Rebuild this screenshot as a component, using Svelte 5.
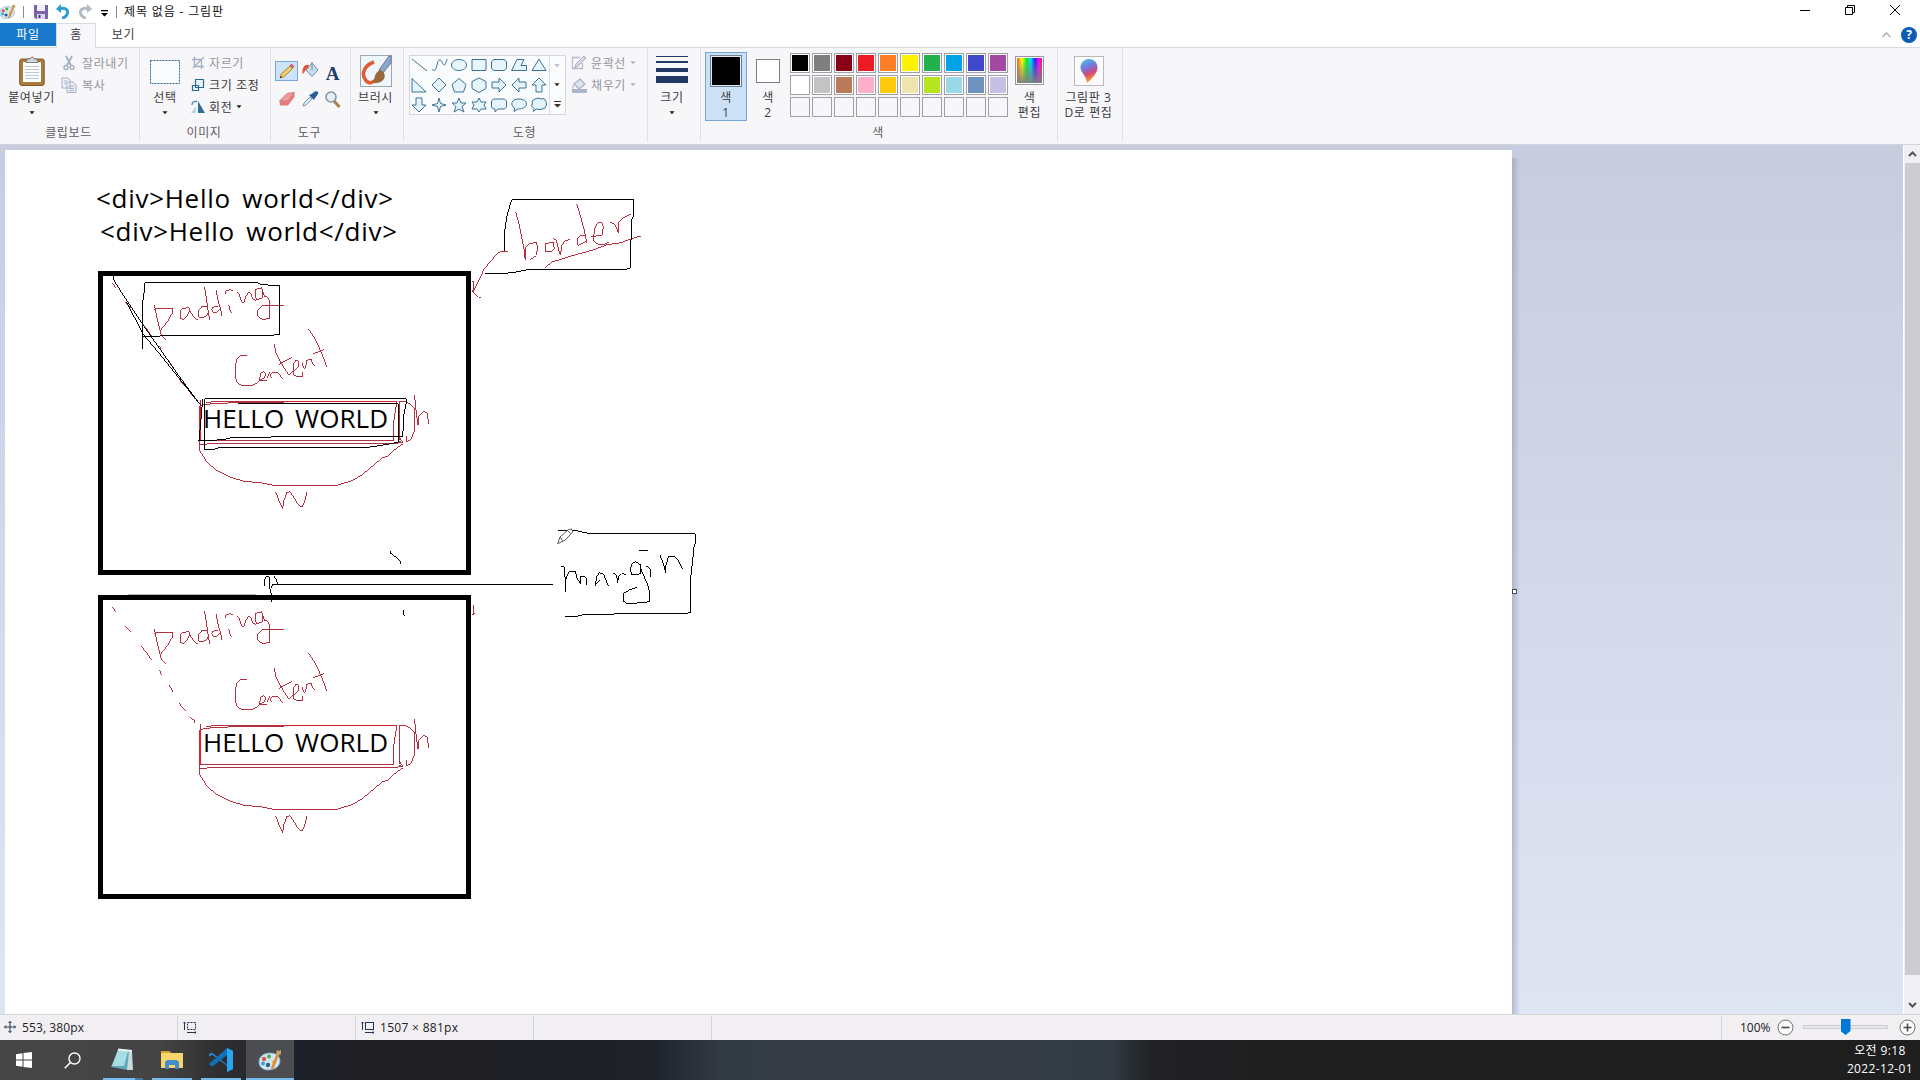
<script>
  const palette = [
    '#000000', '#7f7f7f', '#880015', '#ed1c24', '#ff7f27', '#fff200', '#22b14c', '#00a2e8', '#3f48cc', '#a349a4',
    '#ffffff', '#c3c3c3', '#b97a57', '#ffaec9', '#ffc90e', '#efe4b0', '#b5e61d', '#99d9ea', '#7092be', '#c8bfe7',
    null, null, null, null, null, null, null, null, null, null
  ];

  // Outlines of the shape gallery, each in a 20 x 20 cell
  const shapes = [
    'M3 4L18 16',
    'M3 14C5 17 7 15 8 10S11 3 13 7S16 12 18 4',
    'M10 4.500C14.500 4.500 17.500 7 17.500 10S14.500 15.500 10 15.500S2.500 13 2.500 10S5.500 4.500 10 4.500Z',
    'M3 4.500H17V15.500H3Z',
    'M5 4.500H15L17.500 6.500V13.500L15 15.500H5L2.500 13.500V6.500Z',
    'M8 4.500H15L12 10.500H17.500V15.500H2.500Z',
    'M10 4L17 15.500H3Z',
    'M3 3.500L17 17H3Z',
    'M10 3L17 10L10 17L3 10Z',
    'M10 3.500L17 9.500L14.500 17H5.500L3 9.500Z',
    'M10 3L17 6.500V13.500L10 17.500L3 13.500V6.500Z',
    'M3 7H10V3L17 10L10 17V13H3Z',
    'M17 7H10V3L3 10L10 17V13H17Z',
    'M7 17V10H3L10 3L17 10H13V17Z',
    'M7 4V11H3L10 18L17 11H13V4Z',
    'M10 4L11.500 9.500L17 11L11.500 12.500L10 18L8.500 12.500L3 11L8.500 9.500Z',
    'M10 4L12 9H17L13 12.500L15 18L10 15L5 18L7 12.500L3 9H8Z',
    'M10 4L12 8H17L15 11L17 15H12L10 18L8 15H3L5 11L3 8H8Z',
    'M4.500 5H15.500L17.500 7V13L15.500 15H9L6 18V15H4.500L2.500 13V7Z',
    'M10 5C14.500 5 17.500 7 17.500 10S14 15 9 15L5 17.500L5.500 14C1 11 2 5 10 5Z',
    'M6 5L9 4L12 5L15 4.500L17 7.500L17.500 11L15.500 14.500L11 15.500L7 15L4.500 17.500L5 14.500L2.500 12L3.500 9L3 7Z'
  ];

  // Freehand strokes that appear in both boxes
  const redStrokes = [
    'M97 80L107 95M135 138L152 155M183 198L200 217L214 240M238 270L244 284M267 315L279 335M297 369L315 391M330 412L343 420L344 428',
    'M222 145L226 165L235 205L243 235L257 251M222 158L262 155L278 157L276 170L262 195L240 222',
    'M302 187L300 165L304 158L325 152M325 152L330 165L340 180L350 191L354 189M302 187L310 188L322 175L330 160',
    'M373 93L378 125L384 165L388 190M384 150L365 150L356 160L356 181L362 185L378 178L386 165',
    'M407 100L413 130L420 155L425 178M413 150L398 152L394 158L397 168L410 167L417 158',
    'M445 145L449 160L454 170M435 112L437 104L446 100L459 101',
    'M472 107L478 117L484 137L491 137L497 120L504 107L512 112L517 128L527 132',
    'M527 98L545 94L546 125L528 130L526 115L527 98M546 100L552 120L562 122L568 135V187L545 188L533 180V160L545 148L570 146H612',
    'M500 298L480 298L470 307L466 325V365L472 380L485 387H515L530 380L540 368',
    'M540 352L550 345L556 350L553 362L540 373H559M540 352L538 372',
    'M560 365L568 348L573 365M573 350L590 347L597 352L606 367',
    'M583 262L585 285L600 315L615 340L626 355L640 343M597 323L615 313L636 302',
    'M640 345L655 330L656 315L648 311L640 320V355L650 361L668 360V347',
    'M665 320L672 338L676 330L680 312L692 307L697 320L704 330',
    'M684 217L700 240L715 270L730 305L740 332M697 292L730 280',
    'M362 430L360 460V553H941V490L945 465L950 437',
    'M378 437L470 434H950M362 447L380 443L470 438H612',
    'M357 450V566L385 562H940L968 557M958 437V550',
    'M955 434L972 434L990 442L1002 455V525L992 548L980 556L978 540',
    'M955 553L968 560L960 545',
    'M357 560V582L370 600L380 618L410 642L450 662L490 674L550 680L582 687H768L790 680L815 673L845 655L885 622L905 605L925 598L945 578L968 562',
    'M586 706L597 735L607 757L610 735L620 707L630 706L645 730L655 746L665 751L673 735L680 708',
    'M1003 417L1007 460L1013 506L1016 480L1030 463L1040 470L1046 502',
    'M1180 75V105M1174 105L1185 98'
  ];
</script>

{#snippet caret(dim = false)}
  <svg class="caret" class:dim viewBox="0 0 7 4"><path d="M.5 0h6L3.500 3.500z" /></svg>
{/snippet}

{#snippet redSketch()}
  {#each redStrokes as d}<path {d} />{/each}
  <path class="bold" d="M612 435H950M360 450V553" />
{/snippet}

{#snippet paintIcon()}
  <svg class="palette-icon" viewBox="0 0 24 24">
    <path d="M12 5C5 5 1 9 1 14c0 5 4 8 9 8 7 0 12-4 12-9 0-5-4-8-10-8z" fill="#cfe6f3" stroke="#7fb0cc" stroke-width=".8" />
    <circle cx="6" cy="11" r="2.200" fill="#e2574b" /><circle cx="11" cy="8.500" r="2" fill="#58a94f" />
    <circle cx="5" cy="15.500" r="2" fill="#4a9ad6" /><circle cx="16" cy="14" r="2" fill="#f0b53d" />
    <circle cx="10" cy="17" r="2.200" fill="#2c5f8a" />
    <path d="M20 6L14 21" stroke="#e08a33" stroke-width="2.600" />
    <path d="M18 6l1-4 2 1 2-1v4l-3 2z" fill="#caa06a" />
  </svg>
{/snippet}

<div class="window">
  <header class="titlebar">
    <div class="quick">
      <span class="app-icon">{@render paintIcon()}</span>
      <i class="bar"></i>
      <svg class="save" width="14" height="14" viewBox="0 0 14 14"><path d="M0 0h14v14H2L0 12z" fill="#7b62a8" /><path d="M3 0h8v6H3z" fill="#eef0fa" /><path d="M3 9h8v5H3z" fill="#d8d8e8" /><path d="M4.500 10h2v3h-2z" fill="#4b3b75" /></svg>
      <svg class="undo" width="14" height="15" viewBox="0 0 14 15"><path d="M3 5C8 3 12 5 11.500 9C11 12 8 14 6 14" fill="none" stroke="#2c9bd8" stroke-width="3" /><path d="M0 5L5 0V9z" fill="#2c9bd8" /></svg>
      <svg class="redo" width="14" height="15" viewBox="0 0 14 15"><path d="M11 5C6 3 2 5 2.500 9C3 12 6 14 8 14" fill="none" stroke="#b4bac4" stroke-width="3" /><path d="M14 5L9 0V9z" fill="#b4bac4" /></svg>
      <svg class="more" width="7" height="7" viewBox="0 0 7 7"><path d="M0 0h7v1.200H0zM0 3h7L3.500 6.500z" /></svg>
      <i class="bar second"></i>
      <span class="title">제목 없음 - 그림판</span>
    </div>
    <div class="controls">
      <svg width="12" height="12" viewBox="0 0 12 12"><path d="M1 6.500h10" /></svg>
      <svg width="12" height="12" viewBox="0 0 12 12"><path d="M1.500 3.500h7v7h-7zM3.500 3V1.500h7v7H9" /></svg>
      <svg width="12" height="12" viewBox="0 0 12 12"><path d="M1 1l10 10M11 1L1 11" /></svg>
    </div>
  </header>

  <nav class="tabs">
    <span class="tab file">파일</span>
    <span class="tab home">홈</span>
    <span class="tab view">보기</span>
    <div class="help">
      <svg width="9" height="6" viewBox="0 0 9 6"><path d="M.5 5L4.500 1L8.500 5" fill="none" stroke="#a9adb3" stroke-width="1.400" /></svg>
      <b>?</b>
    </div>
  </nav>

  <section class="ribbon">
    <div class="group clipboard">
      <div class="body">
        <div class="big paste">
          <svg width="26" height="30" viewBox="0 0 26 30"><rect x=".7" y="3" width="24.500" height="26.500" rx="2" fill="#a87c3e" stroke="#7f5b2b" /><path d="M4 6h18v20H4z" fill="#fdfdfd" /><path d="M6 10.500h14M6 13.500h14M6 16.500h14M6 19.500h14M6 22.500h14" stroke="#b8c4d8" /><path d="M7 6.500L8 3h3l1.500-2h1.500L15.500 3H18l1 3.500z" fill="#d5d7db" stroke="#666" stroke-width=".8" /></svg>
          <span>붙여넣기</span>{@render caret()}
        </div>
        <div class="rows">
          <div class="row dim"><svg width="16" height="16" viewBox="0 0 16 16"><path d="M5 1l5 9.500M11 1L6 10.500" stroke="#a5b0c6" stroke-width="1.800" /><circle cx="5" cy="12.500" r="2" fill="none" stroke="#a5b0c6" stroke-width="1.400" /><circle cx="11" cy="12.500" r="2" fill="none" stroke="#a5b0c6" stroke-width="1.400" /></svg>잘라내기</div>
          <div class="row dim"><svg width="16" height="16" viewBox="0 0 16 16"><path d="M1 1h6l2 2v8H1zM6 5h6l3 3v7.500H6z" fill="#eef1f7" stroke="#a5b0c6" /><path d="M3 4h3M3 6.500h2M8 9h5M8 11.500h5M8 13.500h5" stroke="#a5b0c6" /></svg>복사</div>
        </div>
      </div>
      <div class="name">클립보드</div>
    </div>

    <div class="group image">
      <div class="body">
        <div class="big select">
          <svg width="32" height="30" viewBox="0 0 32 30"><rect x="1.500" y="4.500" width="29" height="23" fill="#fbfcfe" stroke="#2f6296" stroke-dasharray="2 1" /></svg>
          <span>선택</span>{@render caret()}
        </div>
        <div class="rows">
          <div class="row dim"><svg width="14" height="14" viewBox="0 0 14 14"><path d="M3.500 1v9.500H13M1 3.500h9.500V13M2 12L13 1" fill="none" stroke="#a5b0c6" stroke-width="1.300" /></svg>자르기</div>
          <div class="row"><svg width="14" height="14" viewBox="0 0 14 14"><path d="M4.500 1.500h8v8h-8zM1.500 7.500h6v5h-6z" fill="#e9f5fb" stroke="#2b6a8e" stroke-width="1.200" /></svg>크기 조정</div>
          <div class="row"><svg width="14" height="14" viewBox="0 0 14 14"><path d="M7 13V1l7 12z" fill="#2f6f96" /><path d="M0 13l5-7v7z" fill="#b6d8ea" /><path d="M1 5C1 2 3 1 6 1.500" fill="none" stroke="#3c88c4" stroke-width="1.300" /></svg>회전{@render caret()}</div>
        </div>
      </div>
      <div class="name">이미지</div>
    </div>

    <div class="group tools">
      <div class="body">
        <div class="tool on"><svg width="18" height="18" viewBox="0 0 18 18"><path d="M2 16l1.500-4.500L12 4l2.500 2.500-8 8z" fill="#f2cf63" stroke="#8f7340" stroke-width=".8" /><path d="M11.500 3.500L13.500 1.500l3 3-2 2z" fill="#d2616b" /><path d="M2 16l.6-2.200 1.600 1.500z" fill="#333" /></svg></div>
        <div class="tool"><svg width="18" height="18" viewBox="0 0 18 18"><path d="M5 9l6-7 6 7-6 6.500z" fill="#c8dce9" stroke="#6c93ab" /><path d="M11 9V1" stroke="#6c93ab" /><path d="M8 4C4 3 1 6 1.500 13C4 12 3 9 7 7z" fill="#e0553a" /></svg></div>
        <div class="tool"><strong>A</strong></div>
        <div class="tool"><svg width="18" height="18" viewBox="0 0 18 18"><path d="M1.500 11L9 3.500l7.500-1L10 11z" fill="#f19b9c" stroke="#c66a6c" stroke-width=".8" /><path d="M1.500 11H10v4.500H2zM10 11l6.500-8.500V7L10 15.500z" fill="#e27c7e" /></svg></div>
        <div class="tool"><svg width="18" height="18" viewBox="0 0 18 18"><path d="M2 16l1-3 6-6 2 2-6 6z" fill="#d7ecf6" stroke="#63869b" stroke-width=".8" /><path d="M8 5l5 5 1-2 3-4c1-2-1-3.500-3-2.500L10.500 4z" fill="#255f97" /></svg></div>
        <div class="tool"><svg width="18" height="18" viewBox="0 0 18 18"><path d="M10 11l5.500 6" stroke="#b08145" stroke-width="3" /><circle cx="7" cy="7" r="5" fill="#e4eff7" stroke="#8b95a3" stroke-width="1.600" /></svg></div>
      </div>
      <div class="name">도구</div>
    </div>

    <div class="group brush">
      <div class="body">
        <div class="big">
          <svg width="32" height="32" viewBox="0 0 32 32"><rect x=".5" y=".5" width="31" height="31" fill="#eef5fb" stroke="#9aa7b5" /><path d="M14 7C5 10 1 18 5 24C8 30 13 28 17 24" fill="none" stroke="#df5c33" stroke-width="3.500" /><path d="M31 1v7l-8 10-4-3L29 1z" fill="#8da6c9" stroke="#667ea5" /><path d="M20 15c4 1 6 5 4 9-3 4-8 5-11 3 2-3 1-9 7-12z" fill="#96683b" /></svg>
          <span>브러시</span>{@render caret()}
        </div>
      </div>
    </div>

    <div class="group shape-group">
      <div class="body">
        <div class="gallery">
          <div class="cells">{#each shapes as d, i}<svg viewBox="0 0 20 20"><path {d} fill={i < 2 ? 'none' : '#e6f5fc'} /></svg>{/each}</div>
          <div class="scroll">{@render caret(true)}{@render caret()}<svg class="drop" width="7" height="7" viewBox="0 0 7 7"><path d="M0 0h7v1H0zM0 3h7L3.500 6.500z" /></svg></div>
        </div>
        <div class="rows">
          <div class="row dim"><svg width="16" height="16" viewBox="0 0 16 16"><path d="M9 2.500H1.500v11h10V8" fill="none" stroke="#b5bbcb" stroke-width="1.300" /><path d="M4 13l1-4 8-8 2 2-8 8z" fill="#dcd8ea" stroke="#aaa6c5" /></svg>윤곽선{@render caret(true)}</div>
          <div class="row dim"><svg width="16" height="16" viewBox="0 0 16 16"><path d="M3 7l6-5 5 5-6 5z" fill="#dfe4ee" stroke="#a5b0c6" stroke-width="1.200" /><path d="M1 12h15v4H1z" fill="#a8b5ca" /><path d="M3 7c-2 2-2 4-1 6z" fill="#a5b0c6" /></svg>채우기{@render caret(true)}</div>
        </div>
      </div>
      <div class="name">도형</div>
    </div>

    <div class="group size">
      <div class="body">
        <div class="big">
          <svg width="32" height="32" viewBox="0 0 32 32"><path d="M0 1h32v1H0zM0 6h32v2H0zM0 13h32v4H0zM0 21h32v7H0z" fill="#1f3864" /></svg>
          <span>크기</span>{@render caret()}
        </div>
      </div>
    </div>

    <div class="group colors">
      <div class="body">
        <div class="color-btn active"><i class="swatch black"></i><span>색<br />1</span></div>
        <div class="color-btn"><i class="swatch white"></i><span>색<br />2</span></div>
        <div class="palette">{#each palette as c}<i style:background={c ?? 'transparent'} class:empty={!c}></i>{/each}</div>
        <div class="edit"><i class="rainbow"></i><span>색<br />편집</span></div>
      </div>
      <div class="name">색</div>
    </div>

    <div class="group paint3d">
      <div class="body">
        <div class="edit">
          <i class="frame"><svg width="18" height="24" viewBox="0 0 18 24">
            <defs><linearGradient id="drop" x1="0" y1="0" x2=".3" y2="1"><stop offset="0" stop-color="#45c5ee" /><stop offset=".45" stop-color="#7a74d8" /><stop offset=".7" stop-color="#d5487c" /><stop offset="1" stop-color="#f5a623" /></linearGradient></defs>
            <path d="M9 0C4 0 .5 4 .5 8.500c0 5 6 8 6.500 15.500C12 20 17.500 14 17.500 8.500C17.500 4 14 0 9 0z" fill="url(#drop)" /></svg></i>
          <span>그림판 3<br />D로 편집</span>
        </div>
      </div>
    </div>
  </section>

  <main class="workspace">
    <div class="paper">
      <svg class="drawing" viewBox="5 150 1507 864">
        <g class="typed">
          <text x="96" y="207.500" textLength="297">&lt;div&gt;Hello world&lt;/div&gt;</text>
          <text x="100" y="241" textLength="297">&lt;div&gt;Hello world&lt;/div&gt;</text>
          <text x="203" y="428" textLength="185">HELLO WORLD</text>
          <text x="203" y="752" textLength="185">HELLO WORLD</text>
        </g>
        <g class="frames">
          <rect x="100.500" y="273.500" width="368" height="299" />
          <rect x="100.500" y="597.500" width="368" height="299" />
        </g>
        <g class="ink red">
          <g transform="translate(80.300 256.500) scale(.33333)">{@render redSketch()}</g>
          <g transform="translate(80.300 580.500) scale(.33333)">{@render redSketch()}</g>
          <g transform="translate(460.300 180.500) scale(.33333)">
            <path d="M143 212H123L112 218L72 265L50 310L38 333M38 303L40 335M38 333L55 350L63 353" />
            <path d="M166 94L175 125L183 165L192 210L195 240L196 200L205 190L228 186L232 200L228 225L210 237" />
            <path d="M255 190L278 185L282 205L275 213L257 214L255 190M278 172L288 180L300 225L305 195L315 180L328 178" />
            <path d="M349 70L360 105L372 150L380 188M375 165L360 165L352 172L353 195L370 187L380 182" />
            <path d="M393 168L425 165L429 140L425 127L412 127L402 145L400 180L408 190L430 193L446 185M450 125L462 130L475 157L476 125L490 112L512 100" />
            <path d="M253 262L275 245L330 227L400 208L440 193L480 187L513 175L543 166" />
          </g>
        </g>
        <g class="ink">
          <g transform="translate(80 170.300) scale(.33333)">
            <path d="M195 338H533L545 343L599 346V493L582 494L578 496H242L238 499H187M195 338L194 355L188 395L187 535" />
            <path d="M100 318L103 333L140 390L190 465L225 515L285 600L310 635L358 700M140 395L160 435L190 492L230 540L290 615L330 665L362 705" />
          </g>
          <g transform="translate(80 360.300) scale(.33333)">
            <path d="M374 115H979V125L972 160L968 230H575L540 232L450 233L430 238L380 241H357L362 190L368 115" />
            <path d="M374 115V268L400 267L420 262H858L900 256L955 246V130H475M930 573L933 580L950 592L962 604V610" />
            <path d="M555 677L553 660L560 646L567 650L570 685L575 705V725M580 646L588 655L592 670M575 682L577 673H1418" />
            <path class="faint" d="M143 703H528" />
            <path d="M970 750L970 758L973 766" />
          </g>
          <g transform="translate(460 180.300) scale(.33333)">
            <path d="M155 58H521V108L516 115L512 200V262L500 267H210L170 275L130 280H75M155 58L150 75L140 110L133 160V212" />
            <path d="M295 1051H350L372 1057L400 1060H706V1090L702 1100L697 1150L691 1200V1297L675 1300H470L450 1303H370L345 1309H316" />
            <path d="M303 1157L312 1160L315 1190L317 1235L318 1195L328 1173L345 1173L352 1195L361 1210L361 1190L372 1187L380 1195V1214" />
            <path d="M406 1216L410 1190L418 1178L430 1180L440 1205L446 1217M406 1212L418 1200M460 1178L470 1185L473 1207L475 1190L485 1180L497 1182" />
            <path d="M515 1150L527 1144L543 1155V1178L530 1184L514 1183L512 1165L515 1150M541 1160L548 1180L560 1205L569 1235V1264L550 1267L500 1270L490 1262V1240L510 1228L530 1221" />
            <path d="M558 1157L570 1165L572 1190M537 1110H563M600 1125L610 1150L617 1178L618 1155L625 1130L640 1127L655 1140L668 1166" />
            <path class="cursor" d="M293 1090L300 1070L325 1048L335 1046L338 1055L315 1080ZM300 1070L308 1082M322 1050L332 1060" />
          </g>
        </g>
      </svg>
    </div>
    <div class="shade"><i class="handle"></i></div>
    <div class="vscroll">
      <svg width="9" height="6" viewBox="0 0 9 6"><path d="M1 5L4.500 1.500L8 5" /></svg>
      <i class="thumb"></i>
      <svg width="9" height="6" viewBox="0 0 9 6"><path d="M1 1L4.500 4.500L8 1" /></svg>
    </div>
  </main>

  <footer class="status">
    <div class="cell first"><svg width="12" height="12" viewBox="0 0 12 12"><path d="M6 .5v11M.5 6h11M4.500 2L6 .5L7.500 2M4.500 10L6 11.500L7.500 10M2 4.500L.5 6L2 7.500M10 4.500L11.500 6L10 7.500" /></svg><span class="pos">553, 380px</span></div>
    <div class="cell"><svg width="14" height="13" viewBox="0 0 14 13"><path d="M1.500 9V1M.3 2.300L1.500 1l1.200 1.300M4 11.500h9M11.700 10.300L13 11.500l-1.300 1.200" /><rect x="4.500" y="1.500" width="8" height="7" stroke-dasharray="2 1" /></svg></div>
    <div class="cell"><svg width="14" height="13" viewBox="0 0 14 13"><path d="M1.500 9V1M.3 2.300L1.500 1l1.200 1.300M4 11.500h9M11.700 10.300L13 11.500l-1.300 1.200" /><rect x="4.500" y="1.500" width="8" height="7" /></svg><span class="dims">1507 × 881px</span></div>
    <div class="cell"></div>
    <div class="zoom">
      <span>100%</span>
      <svg width="17" height="17" viewBox="0 0 17 17"><circle cx="8.500" cy="8.500" r="7.500" /><path d="M4.500 8.500h8" /></svg>
      <div class="track"><i></i></div>
      <svg width="17" height="17" viewBox="0 0 17 17"><circle cx="8.500" cy="8.500" r="7.500" /><path d="M4.500 8.500h8M8.500 4.500v8" /></svg>
    </div>
  </footer>

  <div class="taskbar">
    <div class="apps">
      <div class="app"><svg width="16" height="16" viewBox="0 0 16 16"><path d="M0 2.200L6.500 1.300V7.500H0zM7.500 1.100L16 0v7.500H7.500zM0 8.500h6.500v6.200L0 13.800zM7.500 8.500H16V16l-8.500-1.100z" fill="#fff" /></svg></div>
      <div class="app"><svg width="17" height="17" viewBox="0 0 17 17"><circle cx="10.500" cy="6.500" r="5.500" fill="none" stroke="#fff" stroke-width="1.400" /><path d="M6.500 10.500L.7 16.300" stroke="#fff" stroke-width="1.500" /></svg></div>
      <div class="app open stacked"><svg width="24" height="24" viewBox="0 0 24 24"><path d="M8 2l13 1-3 19-17-3z" fill="#5fa9ba" /><path d="M8 2l10 1-4 15-12 0z" fill="#a9dde4" /><path d="M19 3l3 1 1 18-6 0z" fill="#c9d8da" /><path d="M8 1.500l14 1.500" stroke="#e9f4f5" stroke-width="2" /></svg></div>
      <div class="app open"><svg width="22" height="20" viewBox="0 0 22 20"><path d="M0 1h8l2 2h12v15H0z" fill="#f9d56b" /><path d="M0 1h8l2 2H0z" fill="#d9a233" /><path d="M4 19v-7l2-2h10l2 2v7h-4v-4H8v4z" fill="#3f8fcf" /></svg></div>
      <div class="app open"><svg width="24" height="24" viewBox="0 0 24 24"><path d="M18 0l6 3v18l-6 3v-6L3 6.500L1 8.500L0 8l0-1.500L3 4.500L18 17z" fill="#1f8fdc" /><path d="M18 0v7L3.500 18.500L.5 17v-1.500z" fill="#0f70b7" /><path d="M18 0l6 3v18l-6 3z" fill="#2aa5f2" /></svg></div>
      <div class="app open current">{@render paintIcon()}</div>
    </div>
    <div class="clock"><span class="time">오전 9:18</span><span class="date">2022-12-01</span></div>
  </div>
</div>

<style>
  :global(body) { margin: 0; overflow: hidden; }
  .window {
    width: 1920px; height: 1080px; display: flex; flex-direction: column; background: #fff;
    font-family: 'Open Sans', 'Noto Sans CJK KR', sans-serif; font-size: 12px; color: #3b3b3f; line-height: 15px;
  }
  .window svg { display: block; flex: none; }
  i { display: block; flex: none; box-sizing: border-box; }

  .titlebar { height: 23px; display: flex; justify-content: space-between; }
  .quick { display: flex; align-items: center; }
  .app-icon { width: 16px; overflow: hidden; }
  .palette-icon { width: 24px; height: 24px; }
  .app-icon .palette-icon { width: 17px; height: 17px; margin-left: -1px; }
  .bar { width: 1px; height: 12px; margin: 0 10px 0 7px; background: #8a8a8a; }
  .undo { margin-left: 8px; }
  .redo { margin-left: 8px; }
  .more { margin: 4px 0 0 9px; }
  .bar.second { margin: 0 7px 0 8px; }
  .title { color: #111; letter-spacing: .85px; white-space: nowrap; font-size: 12px; }
  .controls { display: flex; gap: 33px; padding: 4px 19px 0 0; }
  .controls path { fill: none; stroke: #000; stroke-width: 1; }

  .tabs { height: 24px; display: flex; border-bottom: 1px solid #dadbdc; position: relative; }
  .tab { height: 23px; line-height: 23px; text-align: center; letter-spacing: .6px; }
  .file { width: 56px; background: #1979ca; color: #fff; }
  .home { width: 40px; height: 25px; background: #f7f6f9; border: 1px solid #dadbdc; border-width: 1px 1px 0; box-sizing: border-box; line-height: 22px; position: relative; z-index: 1; }
  .view { width: 55px; }
  .help { margin-left: auto; display: flex; align-items: center; gap: 10px; padding-right: 3px; }
  .help b { width: 16px; height: 16px; border-radius: 50%; background: #0b5cb8; color: #fff; font-size: 12px; line-height: 16px; text-align: center; }

  .ribbon { height: 96px; display: flex; background: #f7f6f9; border-bottom: 1px solid #d3d4db; letter-spacing: .6px; white-space: nowrap; }
  .group { display: flex; flex-direction: column; box-sizing: border-box; height: 94px; border-right: 1px solid #e2e1e6; }
  .body { height: 77px; display: flex; align-items: flex-start; }
  .name { height: 16px; line-height: 16px; text-align: center; color: #5c5c62; padding-right: 2px; }
  .big { display: flex; flex-direction: column; align-items: center; padding-top: 7px; }
  .big > svg:first-child { height: 32px; }
  .big span { margin: 3px 0 6px; }
  .caret { width: 6px; height: 4px; fill: #222; }
  .caret.dim { fill: #b3b3ba; }
  .rows { display: flex; flex-direction: column; padding-top: 4px; }
  .row { height: 22px; display: flex; align-items: center; gap: 5px; color: #36363a; }
  .row.dim { color: #95959b; }

  .clipboard { width: 140px; }
  .paste { width: 47px; margin-left: 8px; }
  .clipboard .rows { padding-left: 6px; }
  .image { width: 131px; }
  .select { width: 34px; margin-left: 8px; }
  .image .rows { padding-left: 9px; }
  .image .row { gap: 4px; }
  .tools { width: 80px; }
  .tools .body { display: grid; grid-template-columns: repeat(3, 23px); grid-template-rows: 23px 23px; column-gap: 0; row-gap: 6px; padding: 13px 0 0 4px; box-sizing: border-box; }
  .tool { display: flex; align-items: center; justify-content: center; box-sizing: border-box; }
  .tool.on { background: #cce3f8; border: 1px solid #7aa7d6; }
  .tool strong { font: bold 19px/19px 'Liberation Serif', serif; color: #1f3e68; letter-spacing: 0; padding-top: 3px; }
  .brush { width: 53px; }
  .brush .big { width: 49px; }
  .shape-group { width: 244px; }
  .gallery { display: flex; width: 157px; height: 60px; box-sizing: border-box; border: 1px solid #d5d5da; background: #fafbfd; margin: 7px 0 0 5px; }
  .cells { display: grid; grid-template-columns: repeat(7, 20px); grid-template-rows: repeat(3, 19.500px); margin: -1px 0 1px -1px; }
  .cells svg { width: 20px; height: 20px; }
  .cells path { stroke: #3b7396; stroke-width: 1; }
  .scroll { width: 15px; display: flex; flex-direction: column; align-items: center; justify-content: space-between; border-left: 1px solid #dcdce0; padding: 8px 0 6px; box-sizing: border-box; }
  .drop { fill: #333; }
  .shape-group .rows { padding-left: 5px; }
  .shape-group .row { gap: 4px; }
  .size { width: 53px; }
  .size .big { width: 48px; }
  .colors { width: 357px; }
  .color-btn { width: 42px; height: 69px; box-sizing: border-box; display: flex; flex-direction: column; align-items: center; text-align: center; margin: 4px 0 0 4px; border: 1px solid transparent; line-height: 14.500px; }
  .color-btn + .color-btn { margin-left: 0; margin-right: -1px; }
  .color-btn.active { background: #cce1f6; border-color: #76a5d6; }
  .swatch.black { width: 32px; height: 32px; margin: 2px 0 4px; background: #000; border: 1px solid #6d7f95; box-shadow: inset 0 0 0 1px #dfeaf5; }
  .swatch.white { width: 24px; height: 24px; margin: 6px 0 8px; background: #fff; border: 1px solid #7e7e84; }
  .palette { display: grid; grid-template-columns: repeat(10, 20px); grid-auto-rows: 20px; gap: 2px; margin: 5px 7px 0 2px; }
  .palette i { border: 1px solid #a0a0a6; box-shadow: inset 0 0 0 1px #fff; }
  .palette i.empty { box-shadow: none; }
  .edit { display: flex; flex-direction: column; align-items: center; text-align: center; padding-top: 8px; }
  .rainbow { width: 29px; height: 29px; margin-bottom: 5px; border: 1px solid #9a9aa0; box-shadow: inset 0 0 0 1px #fff; background: linear-gradient(to bottom, transparent 10%, #808080), linear-gradient(to right, #f33, #ff0 22%, #0e3 40%, #0df 55%, #22f 70%, #f0f 85%, #f22); }
  .frame { display: flex; width: 30px; height: 30px; margin-bottom: 4px; border: 1px solid #b9b9bf; background: #fcfcfd; align-items: center; justify-content: center; }
  .paint3d { width: 65px; }
  .paint3d .edit { width: 61px; }

  .workspace { height: 869px; display: flex; background: linear-gradient(#c7ccdf, #d3d9e9 50%, #dee5f3); box-sizing: border-box; padding-left: 5px; }
  .paper { width: 1507px; height: 864px; margin-top: 5px; background: #fff; }
  .drawing { width: 1507px; height: 864px; }
  .typed { font-size: 26px; fill: #000; word-spacing: 4px; font-family: 'Open Sans', 'Noto Sans', sans-serif; }
  .frames rect { fill: none; stroke: #000; stroke-width: 5; }
  .ink path { fill: none; stroke: #000; stroke-width: 3; shape-rendering: crispEdges; }
  .ink.red path { stroke: #b5303e; }
  .ink.red .bold { stroke: #e0202c; stroke-width: 5; }
  .ink .faint { stroke: #b5b5b5; }
  .ink .cursor { fill: #fff; stroke: #55585f; shape-rendering: auto; }
  .shade { width: 8px; height: 856px; margin-top: 13px; background: linear-gradient(to right, rgba(150, 155, 185, .6), rgba(150, 155, 185, 0)); display: flex; align-items: center; }
  .handle { width: 5px; height: 5px; margin-top: 11px; border: 1px solid #444a55; background: #fff; }
  .vscroll { width: 17px; margin-left: auto; background: #f0eff2; border-left: 1px solid #fff; box-sizing: border-box; display: flex; flex-direction: column; align-items: center; padding-top: 6px; }
  .vscroll path { fill: none; stroke: #55555a; stroke-width: 2; }
  .thumb { width: 15px; height: 812px; margin: 6px 0 27px; background: #cdccd0; }

  .status { height: 26px; display: flex; box-sizing: border-box; background: #f1eff2; border-top: 1px solid #d5d5da; color: #222; }
  .cell { width: 178px; display: flex; align-items: center; box-sizing: border-box; margin-top: 1px; padding: 0 0 2px 5px; gap: 5px; border-right: 1px solid #d4d3d8; }
  .cell.first { padding-left: 4px; gap: 6px; }
  .dims { letter-spacing: .3px; }
  .pos { letter-spacing: .1px; }
  .status .cell svg path, .cell rect { fill: none; stroke: #1f3550; stroke-width: 1; }
  .zoom { margin: 1px 0 0 auto; width: 199px; box-sizing: border-box; border-left: 1px solid #d4d3d8; padding: 0 4px 2px 18px; display: flex; align-items: center; }
  .zoom span { width: 37px; }
  .zoom circle { fill: #fbfbfc; stroke: #6e6e72; }
  .zoom path { stroke: #4a4a4e; stroke-width: 1.600; }
  .track { width: 85px; height: 4px; margin: 0 11px 0 9px; border: 1px solid #cfced2; background: #e6e5e8; box-sizing: border-box; display: flex; align-items: center; justify-content: center; }
  .track i { width: 10px; height: 16px; background: #0078d7; clip-path: polygon(0 0, 100% 0, 100% 75%, 50% 100%, 0 75%); }

  .taskbar { height: 40px; display: flex; justify-content: space-between; background: linear-gradient(to right, #474546 0, #454445 160px, #302f31 215px, #1d2129 300px, #211f22 400px, #1d2027 560px, #1e222a 650px, #2c333e 700px, #323b44 720px, #363c47 900px, #323b44 1110px, #212226 1150px, #1e1e1e 1300px); }
  .apps { display: flex; }
  .app { width: 49px; height: 40px; display: flex; align-items: center; justify-content: center; box-sizing: border-box; }
  .app:first-child { width: 48px; }
  .open { border-bottom: 2px solid #76b9ed; width: 40px; margin-left: 9px; padding-top: 2px; }
  .open:nth-child(3) { margin-left: 6px; padding-right: 3px; }
  .current { width: 48px; margin-left: 5px; background: #4b4d50; }
  .stacked { border-image: linear-gradient(to right, #76b9ed 78%, #3f7ba8 78%) 1; border-width: 0 0 2px; }
  .clock { display: flex; flex-direction: column; align-items: center; justify-content: center; color: #fff; padding-right: 7px; line-height: 18px; }
  .date, .time { letter-spacing: .35px; }
</style>
